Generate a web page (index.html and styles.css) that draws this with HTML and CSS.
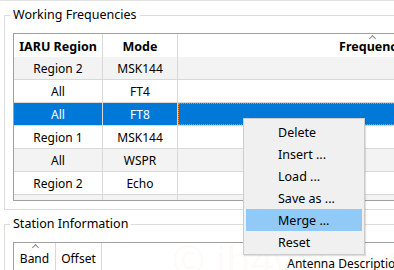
FILE: index.html
```html
<!DOCTYPE html>
<html>
<head>
<meta charset="utf-8">
<link rel="stylesheet" href="styles.css">
</head>
<body>
<div class="page">
  <fieldset class="group g1">
    <legend>Working Frequencies</legend>
    <div class="grid grid1">
      <div class="row head">
        <div class="cell">IARU Region</div>
        <div class="cell">Mode</div>
        <div class="cell sorted">Frequency</div>
      </div>
      <div class="row alt"><div class="cell">Region 2</div><div class="cell">MSK144</div><div class="cell"></div></div>
      <div class="row"><div class="cell">All</div><div class="cell">FT4</div><div class="cell"></div></div>
      <div class="row sel"><div class="cell">All</div><div class="cell">FT8</div><div class="cell focus"></div></div>
      <div class="row"><div class="cell">Region 1</div><div class="cell">MSK144</div><div class="cell"></div></div>
      <div class="row alt"><div class="cell">All</div><div class="cell">WSPR</div><div class="cell"></div></div>
      <div class="row"><div class="cell">Region 2</div><div class="cell">Echo</div><div class="cell"></div></div>
      <div class="row alt"><div class="cell"></div><div class="cell"></div><div class="cell"></div></div>
    </div>
  </fieldset>
  <fieldset class="group g2">
    <legend>Station Information</legend>
    <div class="grid grid2">
      <div class="row head">
        <div class="cell sorted">Band</div>
        <div class="cell">Offset</div>
        <div class="cell antenna">Antenna Description</div>
      </div>
    </div>
  </fieldset>
</div>
<div class="watermark">© jh4vaj.com</div>
<div class="menu">
  <div class="item">Delete</div>
  <div class="item">Insert ...</div>
  <div class="item">Load ...</div>
  <div class="item">Save as ...</div>
  <div class="item hot">Merge ...</div>
  <div class="item">Reset</div>
</div>
</body>
</html>
```
FILE: styles.css
```css
html, body {
  margin: 0;
  padding: 0;
  background: #ffffff;
}
body {
  width: 394px;
  height: 270px;
  overflow: hidden;
  position: relative;
  font-family: "Noto Sans", "DejaVu Sans", sans-serif;
  font-size: 12px;
  color: #000;
}
.page {
  width: 700px;
  border-top: 1px solid #e3e3e3;
}
.group {
  margin: 6px 0 0 4px;
  padding: 10px 0 8px 8px;
  border: 1px solid #dcdcdc;
  min-width: 0;
}
.group legend {
  margin-left: -3px;
  padding: 0 3px;
  line-height: 16px;
  font-size: 12.5px;
  color: #000;
}
.grid {
  border: 1px solid #a0a0a0;
  border-right: none;
  overflow: hidden;
}
.grid1 {
  height: 166px;
}
.grid2 {
  height: 60px;
}
.row {
  display: grid;
  height: 23px;
  box-sizing: border-box;
  border-bottom: 1px solid #d8d8d8;
}
.grid1 .row {
  grid-template-columns: 89px 75px 388px;
}
.grid2 .row {
  grid-template-columns: 42px 46px 486px;
}
.row.head {
  border-bottom: none;
}
.grid1 .head .cell {
  font-weight: bold;
  font-size: 12.5px;
}
.row.alt {
  background: #f3f3f3;
}
.row.sel {
  background: #0078d7;
  color: #fff;
}
.cell {
  border-right: 1px solid #d8d8d8;
  display: flex;
  align-items: center;
  justify-content: center;
  white-space: nowrap;
  position: relative;
}
.head .cell {
  padding-top: 1px;
}
.head .cell.antenna {
  padding-top: 12px;
  border-right: none;
}
.cell.sorted::before {
  content: "";
  position: absolute;
  top: 2px;
  left: 50%;
  width: 4px;
  height: 4px;
  margin-left: -2px;
  border-left: 1px solid #8a8a8a;
  border-top: 1px solid #8a8a8a;
  transform: rotate(45deg);
}
.cell.focus {
  outline: 1px dotted #ff8728;
  outline-offset: -1px;
  border-right: none;
}
.menu {
  position: absolute;
  left: 243px;
  top: 118px;
  width: 116px;
  padding: 2px 2px 1px 2px;
  background: #f0f0f0;
  border: 1px solid #cccccc;
  box-shadow: 1px 1px 1px rgba(0, 0, 0, 0.12);
}
.item {
  height: 22px;
  line-height: 23px;
  padding-left: 32px;
  font-size: 12.5px;
}
.item.hot {
  background: #91c9f7;
}
.watermark {
  position: absolute;
  left: 172px;
  top: 232px;
  font-size: 40px;
  font-family: "Noto Sans", "DejaVu Sans", sans-serif;
  color: rgba(235, 190, 130, 0.08);
  white-space: nowrap;
  pointer-events: none;
}
```
